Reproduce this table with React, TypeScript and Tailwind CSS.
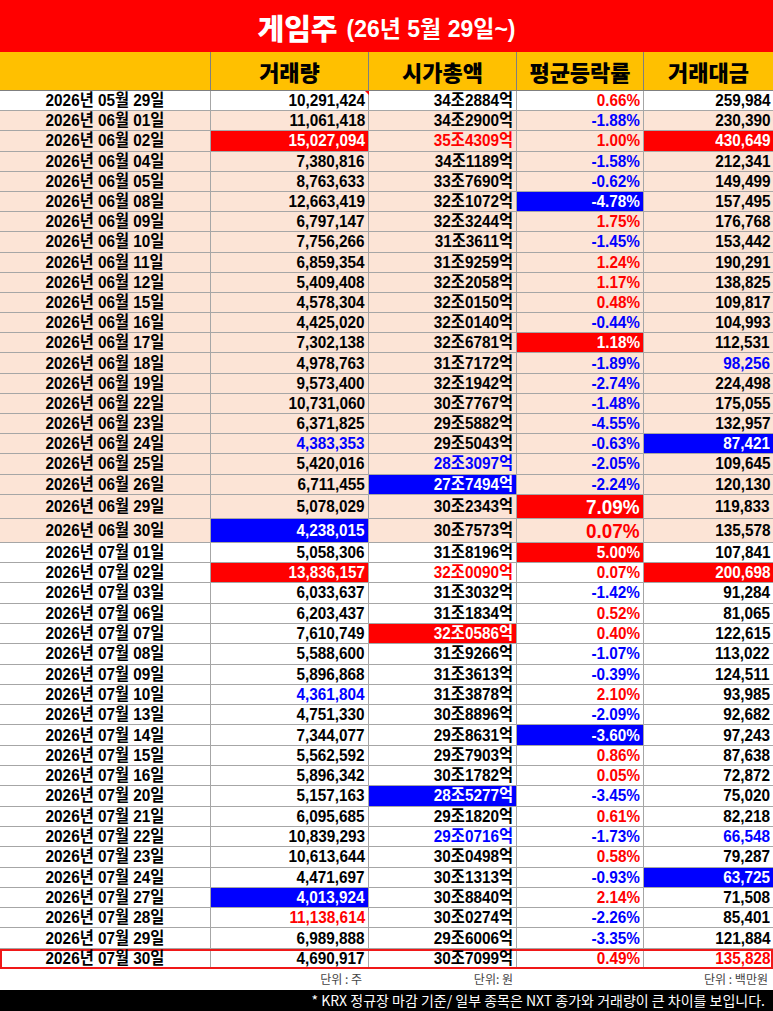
import React from "react";

// "R|" red cell, "B|" blue cell, "r|" red text, "b|" blue text
const rows: string[][] = [
  ["05월 29일", "10,291,424", "34조2884억", "0.66%", "259,984"],
  ["06월 01일", "11,061,418", "34조2900억", "-1.88%", "230,390"],
  ["06월 02일", "R|15,027,094", "r|35조4309억", "1.00%", "R|430,649"],
  ["06월 04일", "7,380,816", "34조1189억", "-1.58%", "212,341"],
  ["06월 05일", "8,763,633", "33조7690억", "-0.62%", "149,499"],
  ["06월 08일", "12,663,419", "32조1072억", "B|-4.78%", "157,495"],
  ["06월 09일", "6,797,147", "32조3244억", "1.75%", "176,768"],
  ["06월 10일", "7,756,266", "31조3611억", "-1.45%", "153,442"],
  ["06월 11일", "6,859,354", "31조9259억", "1.24%", "190,291"],
  ["06월 12일", "5,409,408", "32조2058억", "1.17%", "138,825"],
  ["06월 15일", "4,578,304", "32조0150억", "0.48%", "109,817"],
  ["06월 16일", "4,425,020", "32조0140억", "-0.44%", "104,993"],
  ["06월 17일", "7,302,138", "32조6781억", "R|1.18%", "112,531"],
  ["06월 18일", "4,978,763", "31조7172억", "-1.89%", "b|98,256"],
  ["06월 19일", "9,573,400", "32조1942억", "-2.74%", "224,498"],
  ["06월 22일", "10,731,060", "30조7767억", "-1.48%", "175,055"],
  ["06월 23일", "6,371,825", "29조5882억", "-4.55%", "132,957"],
  ["06월 24일", "b|4,383,353", "29조5043억", "-0.63%", "B|87,421"],
  ["06월 25일", "5,420,016", "b|28조3097억", "-2.05%", "109,645"],
  ["06월 26일", "6,711,455", "B|27조7494억", "-2.24%", "120,130"],
  ["06월 29일", "5,078,029", "30조2343억", "R|7.09%", "119,833"],
  ["06월 30일", "B|4,238,015", "30조7573억", "0.07%", "135,578"],
  ["07월 01일", "5,058,306", "31조8196억", "R|5.00%", "107,841"],
  ["07월 02일", "R|13,836,157", "r|32조0090억", "0.07%", "R|200,698"],
  ["07월 03일", "6,033,637", "31조3032억", "-1.42%", "91,284"],
  ["07월 06일", "6,203,437", "31조1834억", "0.52%", "81,065"],
  ["07월 07일", "7,610,749", "R|32조0586억", "0.40%", "122,615"],
  ["07월 08일", "5,588,600", "31조9266억", "-1.07%", "113,022"],
  ["07월 09일", "5,896,868", "31조3613억", "-0.39%", "124,511"],
  ["07월 10일", "b|4,361,804", "31조3878억", "2.10%", "93,985"],
  ["07월 13일", "4,751,330", "30조8896억", "-2.09%", "92,682"],
  ["07월 14일", "7,344,077", "29조8631억", "B|-3.60%", "97,243"],
  ["07월 15일", "5,562,592", "29조7903억", "0.86%", "87,638"],
  ["07월 16일", "5,896,342", "30조1782억", "0.05%", "72,872"],
  ["07월 20일", "5,157,163", "B|28조5277억", "-3.45%", "75,020"],
  ["07월 21일", "6,095,685", "29조1820억", "0.61%", "82,218"],
  ["07월 22일", "10,839,293", "b|29조0716억", "-1.73%", "b|66,548"],
  ["07월 23일", "10,613,644", "30조0498억", "0.58%", "79,287"],
  ["07월 24일", "4,471,697", "30조1313억", "-0.93%", "B|63,725"],
  ["07월 27일", "B|4,013,924", "30조8840억", "2.14%", "71,508"],
  ["07월 28일", "r|11,138,614", "30조0274억", "-2.26%", "85,401"],
  ["07월 29일", "6,989,888", "29조6006억", "-3.35%", "121,884"],
  ["07월 30일", "4,690,917", "30조7099억", "0.49%", "r|135,828"],
];

const toneClass: Record<string, string> = {
  "": "text-black",
  r: "text-[#ff0000]",
  b: "text-[#0000ff]",
  R: "bg-[#ff0000] text-white",
  B: "bg-[#0000ff] text-white",
};

function parse(value: string, pct = false) {
  const [tone, text] = value.includes("|") ? value.split("|") : ["", value];
  if (pct && tone === "") return { tone: value.startsWith("-") ? "b" : "r", text };
  return { tone, text };
}

const cols = "grid grid-cols-[211px_158px_148px_127px_129px]";
const cellFont = "font-['Liberation_Sans','Noto_Sans_CJK_KR',sans-serif] font-bold text-[17px] leading-none";

function Row({ row, index }: { row: string[]; index: number }) {
  const peach = index >= 1 && index <= 21;
  const tall = index === 20 || index === 21;
  const last = index === rows.length - 1;
  const height = tall ? "h-[24px]" : index < 20 ? "h-[20.2px]" : "h-[20.3px]";
  const base = peach ? "bg-[#fce4d6]" : "bg-white";

  return (
    <div
      className={`${cols} ${height} ${cellFont} relative ${
        last ? "outline-2 outline-[#f01818] -outline-offset-2" : ""
      }`}
    >
      <div className={`${base} flex items-center justify-center border-r border-b border-[#a6a6a6] text-black`}>
        <span className="inline-block scale-x-90">2026년 {row[0]}</span>
      </div>
      {row.slice(1).map((value, i) => {
        const { tone, text } = parse(value, i === 2);
        const filled = tone === "R" || tone === "B";
        const big = tall && i === 2;
        return (
          <div
            key={i}
            className={`${filled ? "" : base} ${toneClass[tone]} flex items-center justify-end pr-[3px] border-b border-[#a6a6a6] ${
              i < 3 ? "border-r" : ""
            } ${big ? "text-[21px]" : ""}`}
          >
            <span className="inline-block origin-right scale-x-90">{text}</span>
          </div>
        );
      })}
      {index === 0 && (
        <span className="absolute left-[365px] top-0 h-0 w-0 border-l-[4px] border-t-[4px] border-l-transparent border-t-[#ff0000]" />
      )}
    </div>
  );
}

export default function App() {
  return (
    <div className="w-[773px] h-[1011px] overflow-hidden bg-white">
      <div className="flex h-[52px] items-center justify-center gap-[9px] bg-[#ff0000] pt-[2px] text-white font-['Noto_Sans_CJK_KR',sans-serif] font-black">
        <span className="text-[29px] leading-none">게임주</span>
        <span className="text-[23px] leading-none font-['Liberation_Sans','Noto_Sans_CJK_KR',sans-serif] font-bold pt-[4px]">
          (26년 5월 29일~)
        </span>
      </div>

      <div className={`${cols} h-[39px] bg-[#ffc000] font-['Noto_Sans_CJK_KR',sans-serif] font-black text-[22px] leading-none text-black`}>
        <div className="border-r border-b border-[#7f7f7f]" />
        <div className="flex items-center justify-center border-r border-b border-[#7f7f7f]">거래량</div>
        <div className="flex items-center justify-center border-r border-b border-[#7f7f7f]">시가총액</div>
        <div className="flex items-center justify-center border-r border-b border-[#7f7f7f]">평균등락률</div>
        <div className="flex items-center justify-center border-b border-[#7f7f7f]">거래대금</div>
      </div>

      {rows.map((row, index) => (
        <Row key={row[0]} row={row} index={index} />
      ))}

      <div className={`${cols} h-[20.7px] items-center font-['Noto_Sans_CJK_KR',sans-serif] text-[12px] leading-none text-[#444]`}>
        <div />
        <div className="text-right pr-[7px]">단위 : 주</div>
        <div className="text-right pr-[4px]">단위: 원</div>
        <div />
        <div className="text-right pr-[5px]">단위 : 백만원</div>
      </div>

      <div className="flex h-[21px] items-center justify-end bg-black pr-[8px] font-['Noto_Sans_CJK_KR',sans-serif] text-[14px] leading-none text-white">
        * KRX 정규장 마감 기준/ 일부 종목은 NXT 종가와 거래량이 큰 차이를 보입니다.
      </div>
    </div>
  );
}
